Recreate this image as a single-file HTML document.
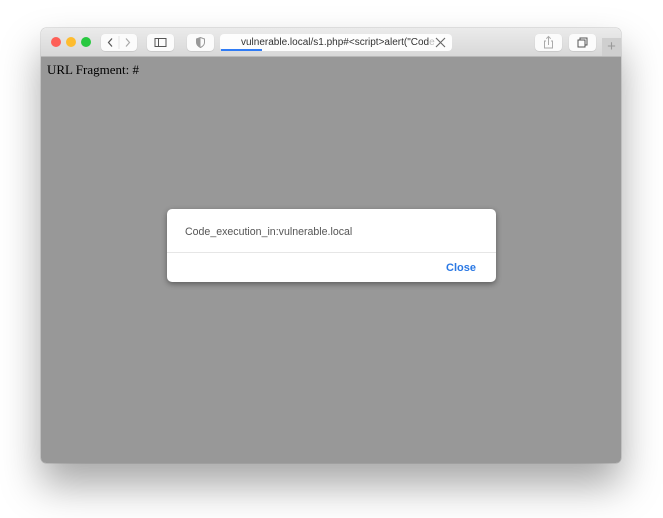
<!DOCTYPE html>
<html><head><style>
body{margin:0;width:663px;height:518px;background:#fff;position:relative;overflow:hidden;font-family:"Liberation Sans",sans-serif}
.win{position:absolute;left:41px;top:28px;width:580px;height:435px;border-radius:5px;overflow:hidden;box-shadow:0 22px 40px rgba(0,0,0,0.35),0 0 0 0.5px rgba(0,0,0,0.2)}
.bar{position:absolute;left:0;top:0;width:580px;height:28px;background:linear-gradient(#ebebeb,#d8d8d8);border-bottom:1px solid #b8b8b8}
.content{position:absolute;left:0;top:29px;width:580px;height:406px;background:#989898}
.dot{position:absolute;top:9px;width:10px;height:10px;border-radius:50%}
.btn{position:absolute;top:6px;height:17px;background:#fbfbfb;border-radius:4px;box-shadow:0 0.5px 1px rgba(0,0,0,0.15)}
.url{position:absolute;left:179px;top:6px;width:232px;height:17px;background:#fdfdfd;border-radius:4px;font-size:10px;color:#333;line-height:17px}
.dlg{position:absolute;left:167px;top:209px;width:329px;height:73px;background:#fff;border-radius:5px;box-shadow:0 2px 6px rgba(0,0,0,0.4)}
</style></head><body>
<div class="win">
<div class="bar">
<div class="dot" style="left:10px;background:#fe5f57"></div>
<div class="dot" style="left:25px;background:#febc2e"></div>
<div class="dot" style="left:40px;background:#28c840"></div>
<div class="btn" style="left:60px;width:36px"><svg width="36" height="17"><path d="M11 4.5 7.5 8.5 11 12.5" stroke="#555" fill="none" stroke-width="1.2"/><line x1="18" y1="2" x2="18" y2="15" stroke="#e3e3e3"/><path d="M25 4.5 28.5 8.5 25 12.5" stroke="#aaa" fill="none" stroke-width="1.2"/></svg></div>
<div class="btn" style="left:106px;width:27px"><svg width="27" height="17"><rect x="8" y="4.5" width="11" height="8" fill="none" stroke="#555"/><line x1="11.5" y1="4.5" x2="11.5" y2="12.5" stroke="#555"/></svg></div>
<div class="btn" style="left:146px;width:27px"><svg width="27" height="17"><path d="M13.5 3.5 9.5 5v3.5c0 2.5 2 4 4 5 2-1 4-2.5 4-5V5z" fill="none" stroke="#999"/><path d="M13.5 3.5v10c-2-1-4-2.5-4-5V5z" fill="#999"/></svg></div>
<div class="url"><span style="position:absolute;left:21px">vulnerable.local/s1.php#&lt;script&gt;alert("Cod<span style="color:#bbb">e</span></span><div style="position:absolute;left:1px;top:15px;width:41px;height:2px;background:#2f7bf5"></div><svg style="position:absolute;left:215px;top:3px" width="11" height="11"><path d="M1 1 10 10M10 1 1 10" stroke="#666" stroke-width="1.1"/></svg></div>
<div class="btn" style="left:494px;width:27px"><svg width="27" height="17"><path d="M11 7H9.5v7h8V7H16M13.5 11V2.5M11.3 4.7 13.5 2.5 15.7 4.7" fill="none" stroke="#aaa"/></svg></div>
<div class="btn" style="left:528px;width:27px"><svg width="27" height="17"><rect x="9" y="6" width="7" height="7" fill="none" stroke="#555"/><path d="M11 6V4h7v7h-2" fill="none" stroke="#555"/></svg></div>
<div style="position:absolute;left:561px;top:10px;width:19px;height:18px;background:#cfcfcf;color:#999;font-size:15px;text-align:center;line-height:18px">+</div>
</div>
<div class="content"><div style="position:absolute;left:6px;top:5px;font-family:'Liberation Serif',serif;font-size:13px;color:#000">URL Fragment: #</div></div>
</div>
<div class="dlg">
<div style="position:absolute;left:18px;top:17px;font-size:10.6px;color:#555">Code_execution_in:vulnerable.local</div>
<div style="position:absolute;left:0;top:43px;width:329px;height:1px;background:#e6e6e6"></div>
<div style="position:absolute;right:20px;top:53px;font-size:11px;color:#2a78e4;font-weight:bold">Close</div>
</div>
</body></html>
